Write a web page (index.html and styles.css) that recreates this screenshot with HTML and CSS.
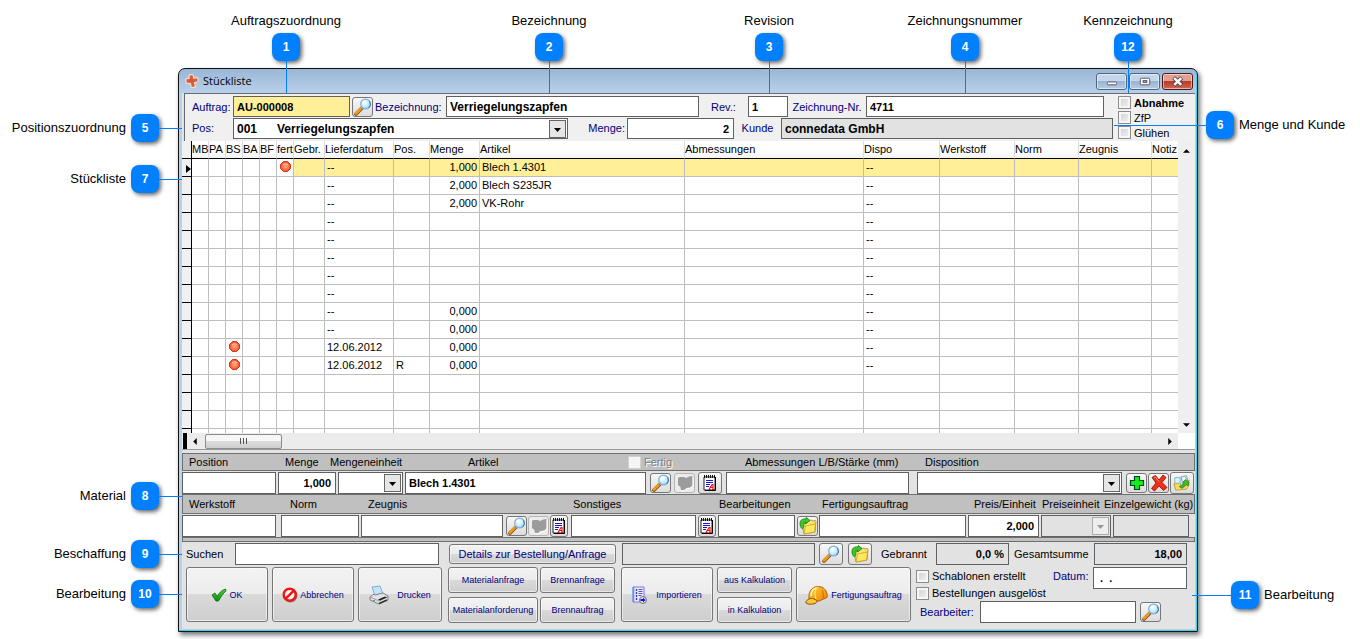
FILE: index.html
```html
<!DOCTYPE html>
<html lang="de">
<head>
<meta charset="utf-8">
<title>Stückliste</title>
<link rel="stylesheet" href="styles.css">
</head>
<body>
<svg class="sprite" aria-hidden="true">
  <defs>
    <linearGradient id="g-handle" x1="0" y1="0" x2="1" y2="1"><stop offset="0" stop-color="#ffc24a"/><stop offset="1" stop-color="#d96a00"/></linearGradient>
    <radialGradient id="g-lens" cx=".4" cy=".35" r=".7"><stop offset="0" stop-color="#ffffff"/><stop offset=".6" stop-color="#c4ecfb"/><stop offset="1" stop-color="#8fc8ee"/></radialGradient>
    <radialGradient id="g-dot" cx=".5" cy=".5" r=".6"><stop offset="0" stop-color="#ffb08c"/><stop offset=".6" stop-color="#ff6a40"/><stop offset="1" stop-color="#e83010"/></radialGradient>
    <linearGradient id="g-folder" x1="0" y1="0" x2="1" y2="1"><stop offset="0" stop-color="#fff9a8"/><stop offset="1" stop-color="#ecc520"/></linearGradient>
    <linearGradient id="g-check" x1="0" y1="0" x2="0" y2="1"><stop offset="0" stop-color="#4fd838"/><stop offset="1" stop-color="#0c8a10"/></linearGradient>
    <linearGradient id="g-helmet" x1="0" y1="0" x2="1" y2="1"><stop offset="0" stop-color="#ffd23c"/><stop offset="1" stop-color="#ee7f00"/></linearGradient>
  </defs>
  <symbol id="i-lens" viewBox="0 0 18 18">
    <path d="M2 16 8 10" stroke="#7a4a10" stroke-width="3.600" stroke-linecap="round"/>
    <path d="M2 15.500 7.400 10" stroke="#f39a1c" stroke-width="2.600" stroke-linecap="round"/>
    <path d="m7 11 2-2" stroke="#8090a0" stroke-width="2"/>
    <circle cx="11.600" cy="6" r="4.900" fill="url(#g-lens)" stroke="#7fb0d8" stroke-width="1.200"/>
    <path d="M8.600 5.500a3 3 0 0 1 3-2.600" fill="none" stroke="#fff" stroke-width="1.200"/>
    <path d="M15.600 3.400a5 5 0 0 1-1 6.600" fill="none" stroke="#4d6f98" stroke-width="1"/>
  </symbol>
  <symbol id="i-part" viewBox="0 0 18 18">
    <path d="M2 4 3.500 3H8l2 1 3-1.500L16.500 2v9l-2 2.500-4 .5-2.500 2H5l-.5-3L2 11z" fill="#9c9c9c"/>
    <path d="M17 3v8.500L15 14l-4 .8L8.500 17H5" fill="none" stroke="#fff" stroke-width=".8"/>
  </symbol>
  <symbol id="i-note" viewBox="0 0 14 18">
    <path d="M1 3h11v13H1z" fill="#fff" stroke="#222" stroke-width="1"/>
    <path d="M12.500 3v13.500H2" fill="none" stroke="#000" stroke-width="1"/>
    <path d="M1.500 1v3M3.500 1v3M5.500 1v3M7.500 1v3M9.500 1v3M11.500 1v3" stroke="#111" stroke-width="1"/>
    <path d="M3 6.500h7M3 8.500h7M3 10.500h4M3 12.500h3" stroke="#1414d8" stroke-width="1"/>
    <path d="M6 15.500 9 10.500h1v5M7.500 13.500H10M5.500 15.500h2M9 15.500h2" fill="none" stroke="#f01010" stroke-width="1.200"/>
  </symbol>
  <symbol id="i-folder" viewBox="0 0 18 18">
    <path d="m3 7 5-1 1-2 4-1 1 1 2.500-.5.5 1-1 10.500L5 17z" fill="url(#g-folder)" stroke="#b48a10" stroke-width=".8"/>
    <path d="m5 17 1.500-8 10-2-1 8z" fill="#fde860" stroke="#c29a14" stroke-width=".7"/>
    <path d="M1 6C1 3 4 1.500 7 2l.3-1.500L11 3.500 6.500 7l.2-2C5 5 4.600 6 5 9L3.500 12C1.500 10.500 1 9 1 6z" fill="#3fc82c" stroke="#14780e" stroke-width=".8"/>
  </symbol>
  <symbol id="i-plus" viewBox="0 0 18 18">
    <path d="M6.500 2.500h5v4h4v5h-4v4h-5v-4h-4v-5h4z" fill="#10f018" stroke="#042" stroke-width="1.200"/>
  </symbol>
  <symbol id="i-cross" viewBox="0 0 18 18">
    <path d="M2 3.500 5.500 1.500 9 6l4-5 3 2.500-4 5 5 5-3.500 3L9 12l-4.500 5-3-2.500L6 9z" fill="#ee3018" stroke="#9c1208" stroke-width=".9"/>
    <path d="m4 4 1.500-.8L9 7.500" fill="none" stroke="#ff9a80" stroke-width="1"/>
  </symbol>
  <symbol id="i-docs" viewBox="0 0 20 18">
    <path d="M2 3h6v9H2z" fill="#d8f2fc" stroke="#6aa8c8" stroke-width=".9"/>
    <path d="m1 10 6-1 3 3 5-2 3 1-3 5-12 1z" fill="#f4d860" stroke="#b89020" stroke-width=".8"/>
    <path d="m9 2 6-1 2 7-6 3z" fill="#e6f8ff" stroke="#5c98bc" stroke-width=".9"/>
    <path d="m14 5 4 3-1 4-2-1-5 4-3-2 5-3-1-2z" fill="#42b82c" stroke="#1a7010" stroke-width=".7"/>
    <path d="m13 2 4 4h2" fill="none" stroke="#d0a828" stroke-width="1"/>
  </symbol>
  <symbol id="i-check" viewBox="0 0 16 14">
    <path d="M1 7 4 5l2 3.500C8 5 11 2 14.500 1l.5 2c-3 2.500-5 5.500-7.500 10H5z" fill="url(#g-check)" stroke="#0a6a0c" stroke-width=".8"/>
  </symbol>
  <symbol id="i-no" viewBox="0 0 16 16">
    <circle cx="8.500" cy="8.500" r="6" fill="none" stroke="#8a7a7a" stroke-width="2"/>
    <circle cx="7.700" cy="7.700" r="6" fill="#f4f4f4" stroke="#f01414" stroke-width="2.400"/>
    <path d="m3.700 11.700 8-8" stroke="#f01414" stroke-width="2.400"/>
  </symbol>
  <symbol id="i-printer" viewBox="0 0 20 20">
    <path d="m3 2 8-1 3 8-8 2z" fill="#c4e2fa" stroke="#6c9cd4" stroke-width=".8"/>
    <path d="m1 12 4-3 1 1 8-2 5 3v4l-9 4-9-4z" fill="#e2e2e4" stroke="#77777c" stroke-width=".9"/>
    <path d="m1 12 9 4 9-4.500" fill="none" stroke="#8a8a90" stroke-width=".8"/>
    <path d="m9 14.500 7-3 2 1-7 3z" fill="#222"/>
    <path d="m10 18.500 8-3.500" stroke="#333" stroke-width="1.400"/>
    <path d="M4 15.500h2" stroke="#3cab3c" stroke-width="1"/>
  </symbol>
  <symbol id="i-import" viewBox="0 0 16 18">
    <path d="M1 1h11v15H1z" fill="#e8ecff" stroke="#8a6cf0" stroke-width="1"/>
    <path d="M1.500 1v15" stroke="#4a9cf4" stroke-width="1.600"/>
    <path d="M4.500 3v12" stroke="#3a3aa0" stroke-width="1.400" stroke-dasharray="2 1"/>
    <path d="M6.500 3.500h4M6.500 5.500h4M6.500 7.500h4M6.500 9.500h3" stroke="#5656b8" stroke-width="1"/>
    <circle cx="11" cy="14" r="3.500" fill="#e4e4ec" stroke="#666" stroke-width=".9"/>
    <path d="M8.500 13h2.500v-1.500L13.500 14 11 16.500V15H8.500z" fill="#1010e8"/>
  </symbol>
  <symbol id="i-helmet" viewBox="0 0 24 20">
    <path d="M4 13C3 6 8 1 14 1.500c6 .5 9 6 8 11l-8 3.500-8 1z" fill="url(#g-helmet)" stroke="#a85a00" stroke-width=".9"/>
    <path d="M1 16.500c2-3 6-4 9-2 3 1 2 3 0 4-3 1-7 1-9-.5z" fill="#ffc72e" stroke="#8c4c00" stroke-width="1"/>
    <path d="M11 14C9 9 10 4 13 1.500" fill="none" stroke="#fff0a0" stroke-width="1"/>
    <path d="M6 11c0-4 2-7 5-8" fill="none" stroke="#fff3b0" stroke-width="1.500"/>
    <path d="M17 5c1 2 2 5 1 8" fill="none" stroke="#c86800" stroke-width="1"/>
  </symbol>
  <symbol id="i-app" viewBox="0 0 14 14">
    <path d="M4 .8 8.200.8 8.500 4.200 13 3.800v4l-3.500.7 1 4.500-4.200.5L5.500 9.500 1 9V4.800l3.300-.3z" fill="#e85a28" stroke="#f4ece8" stroke-width="1"/>
    <path d="M5.500 5.500 8 8" stroke="#806a90" stroke-width="1.500"/>
  </symbol>
  <symbol id="i-dot" viewBox="0 0 11 11">
    <path d="M3.500.5h4l3 3v4l-3 3h-4l-3-3v-4z" fill="url(#g-dot)" stroke="#d42a0c" stroke-width=".9"/>
    <path d="M3 4c1-1.500 4-1.500 5 0" fill="none" stroke="#ffd0b8" stroke-width="1"/>
  </symbol>
</svg>

<main class="figure">
  <section class="window">
    <header class="titlebar">
      <svg class="app-icon"><use href="#i-app"/></svg>
      <h1 class="title">Stückliste</h1>
      <div class="caption-buttons">
        <button type="button" class="cap" aria-label="Minimieren"><svg viewBox="0 0 30 16"><rect x="10.500" y="8.500" width="10" height="3" rx="1" fill="#fff" stroke="#556" /></svg></button>
        <button type="button" class="cap" aria-label="Maximieren"><svg viewBox="0 0 30 16"><rect x="10.500" y="4.500" width="10" height="7" rx="1" fill="#fff" stroke="#556"/><rect x="13.500" y="7" width="4" height="2" fill="#9ab" stroke="#556"/></svg></button>
        <button type="button" class="cap close" aria-label="Schließen"><svg viewBox="0 0 30 16"><path d="m11 4 8.500 8M19.500 4 11 12" stroke="#545" stroke-width="4.400"/><path d="m11.500 4.500 7.500 7M19 4.500l-7.500 7" stroke="#fff" stroke-width="2.600"/></svg></button>
      </div>
    </header>

    <div class="client">
      <form class="head">
        <div class="head-fields">
          <div class="head-row one">
            <label for="auftrag">Auftrag:</label>
            <input id="auftrag" class="field hot" value="AU-000008">
            <button type="button" class="tool" aria-label="Auftrag suchen"><svg><use href="#i-lens"/></svg></button>
            <label for="bez">Bezeichnung:</label>
            <input id="bez" class="field large" value="Verriegelungszapfen">
            <label for="rev" class="mid">Rev.:</label>
            <input id="rev" class="field" value="1">
            <label for="znr" class="mid">Zeichnung-Nr.</label>
            <input id="znr" class="field" value="4711">
          </div>
          <div class="head-row two">
            <label for="pos">Pos:</label>
            <select id="pos" class="field large"><option>001 &nbsp; &nbsp; &nbsp;Verriegelungszapfen</option></select>
            <label for="menge" class="right-text">Menge:</label>
            <input id="menge" class="field num" value="2">
            <label for="kunde" class="mid">Kunde</label>
            <input id="kunde" class="field flat large" value="connedata GmbH" readonly>
          </div>
        </div>
        <div class="flags">
          <label class="tick strong"><input type="checkbox">Abnahme</label>
          <label class="tick"><input type="checkbox">ZfP</label>
          <label class="tick"><input type="checkbox">Glühen</label>
        </div>
      </form>

      <div class="list">
        <div class="list-view">
          <table class="parts">
            <colgroup><col class="c-ind"><col class="c-f"><col class="c-f"><col class="c-f"><col class="c-f"><col class="c-f"><col class="c-f"><col class="c-geb"><col class="c-lief"><col class="c-pos"><col class="c-men"><col class="c-art"><col class="c-abm"><col class="c-dis"><col class="c-wer"><col class="c-nor"><col class="c-zeu"><col class="c-not"></colgroup>
            <thead><tr><th></th><th>MB</th><th>PA</th><th>BS</th><th>BA</th><th>BF</th><th>fert</th><th>Gebr.</th><th>Lieferdatum</th><th>Pos.</th><th>Menge</th><th>Artikel</th><th>Abmessungen</th><th>Dispo</th><th>Werkstoff</th><th>Norm</th><th>Zeugnis</th><th>Notiz</th></tr></thead>
            <tbody>
              <tr class="current"><td class="ptr"><svg viewBox="0 0 5 8"><path d="M0 0v8l5-4z"/></svg><td><td><td><td><td><td class="dot"><svg><use href="#i-dot"/></svg><td><td>--<td><td>1,000<td>Blech 1.4301<td><td>--<td><td><td><td></tr>
              <tr><td><td><td><td><td><td><td><td><td>--<td><td>2,000<td>Blech S235JR<td><td>--<td><td><td><td></tr>
              <tr><td><td><td><td><td><td><td><td><td>--<td><td>2,000<td>VK-Rohr<td><td>--<td><td><td><td></tr>
              <tr><td><td><td><td><td><td><td><td><td>--<td><td><td><td><td>--<td><td><td><td></tr>
              <tr><td><td><td><td><td><td><td><td><td>--<td><td><td><td><td>--<td><td><td><td></tr>
              <tr><td><td><td><td><td><td><td><td><td>--<td><td><td><td><td>--<td><td><td><td></tr>
              <tr><td><td><td><td><td><td><td><td><td>--<td><td><td><td><td>--<td><td><td><td></tr>
              <tr><td><td><td><td><td><td><td><td><td>--<td><td><td><td><td>--<td><td><td><td></tr>
              <tr><td><td><td><td><td><td><td><td><td>--<td><td>0,000<td><td><td>--<td><td><td><td></tr>
              <tr><td><td><td><td><td><td><td><td><td>--<td><td>0,000<td><td><td>--<td><td><td><td></tr>
              <tr><td><td><td><td class="dot"><svg><use href="#i-dot"/></svg><td><td><td><td><td>12.06.2012<td><td>0,000<td><td><td>--<td><td><td><td></tr>
              <tr><td><td><td><td class="dot"><svg><use href="#i-dot"/></svg><td><td><td><td><td>12.06.2012<td>R<td>0,000<td><td><td>--<td><td><td><td></tr>
              <tr><td><td><td><td><td><td><td><td><td><td><td><td><td><td><td><td><td><td></tr>
              <tr><td><td><td><td><td><td><td><td><td><td><td><td><td><td><td><td><td><td></tr>
              <tr><td><td><td><td><td><td><td><td><td><td><td><td><td><td><td><td><td><td></tr>
              <tr><td><td><td><td><td><td><td><td><td><td><td><td><td><td><td><td><td><td></tr>
            </tbody>
          </table>
        </div>
        <div class="vbar"><svg viewBox="0 0 8 4"><path d="M0 4 4 0l4 4z"/></svg><svg viewBox="0 0 8 4"><path d="M0 0h8L4 4z"/></svg></div>
        <div class="hbar">
          <span class="stop"></span>
          <svg viewBox="0 0 4 8"><path d="M4 0v8L0 4z"/></svg>
          <span class="thumb"><i></i><i></i><i></i></span>
          <svg class="end" viewBox="0 0 4 8"><path d="M0 0v8l4-4z"/></svg>
        </div>
      </div>

      <form class="detail">
        <div class="band b1">
          <label for="d-pos">Position</label><label for="d-menge">Menge</label><label for="d-me">Mengeneinheit</label><label for="d-art">Artikel</label>
          <label class="tick off"><input type="checkbox" disabled>Fertig</label>
          <label for="d-abm">Abmessungen L/B/Stärke (mm)</label><label for="d-dis">Disposition</label>
        </div>
        <div class="fields f1">
          <input id="d-pos" class="field">
          <input id="d-menge" class="field num" value="1,000">
          <select id="d-me" class="field"><option></option></select>
          <input id="d-art" class="field" value="Blech 1.4301">
          <div class="tools">
            <button type="button" class="tool" aria-label="Artikel suchen"><svg><use href="#i-lens"/></svg></button>
            <button type="button" class="tool" aria-label="Zeichnung" disabled><svg><use href="#i-part"/></svg></button>
            <button type="button" class="tool wide" aria-label="Notiz"><svg><use href="#i-note"/></svg></button>
          </div>
          <input id="d-abm" class="field">
          <div class="inset"><select id="d-dis" class="field"><option></option></select></div>
          <div class="tools tight">
            <button type="button" class="tool" aria-label="Hinzufügen"><svg><use href="#i-plus"/></svg></button>
            <button type="button" class="tool" aria-label="Löschen"><svg><use href="#i-cross"/></svg></button>
            <button type="button" class="tool wide" aria-label="Kopieren"><svg><use href="#i-docs"/></svg></button>
          </div>
        </div>
        <div class="band b2">
          <label for="e-wer">Werkstoff</label><label for="e-nor">Norm</label><label for="e-zeu">Zeugnis</label><label for="e-son">Sonstiges</label><label for="e-bea">Bearbeitungen</label><label for="e-fer">Fertigungsauftrag</label><label for="e-pre">Preis/Einheit</label><label for="e-pe">Preiseinheit</label><label for="e-gew">Einzelgewicht (kg)</label>
        </div>
        <div class="fields f2">
          <input id="e-wer" class="field">
          <div class="inset slight"><input id="e-nor" class="field"></div>
          <input id="e-zeu" class="field">
          <div class="tools">
            <button type="button" class="tool" aria-label="Zeugnis suchen"><svg><use href="#i-lens"/></svg></button>
            <button type="button" class="tool" aria-label="Zeichnung" disabled><svg><use href="#i-part"/></svg></button>
            <button type="button" class="tool slim" aria-label="Notiz"><svg><use href="#i-note"/></svg></button>
          </div>
          <input id="e-son" class="field">
          <button type="button" class="tool slim" aria-label="Notiz"><svg><use href="#i-note"/></svg></button>
          <input id="e-bea" class="field">
          <button type="button" class="tool" aria-label="Bearbeitungen öffnen"><svg><use href="#i-folder"/></svg></button>
          <input id="e-fer" class="field">
          <input id="e-pre" class="field num" value="2,000">
          <select id="e-pe" class="field pale" disabled><option></option></select>
          <input id="e-gew" class="field pale" disabled>
        </div>
        <div class="band thin"></div>
      </form>

      <form class="foot">
        <div class="search">
          <label for="s-q">Suchen</label>
          <input id="s-q" class="field">
          <button type="button" class="push big">Details zur Bestellung/Anfrage</button>
          <input class="field pale" aria-label="Bestellung" readonly>
          <button type="button" class="tool wide" aria-label="Bestellung suchen"><svg><use href="#i-lens"/></svg></button>
          <button type="button" class="tool wide" aria-label="Bestellung öffnen"><svg><use href="#i-folder"/></svg></button>
          <label for="s-geb" class="mid">Gebrannt</label>
          <input id="s-geb" class="field pale num" value="0,0 %" readonly>
          <label for="s-sum" class="sum">Gesamtsumme</label>
          <input id="s-sum" class="field pale num" value="18,00" readonly>
        </div>
        <div class="actions">
          <button type="button" class="push tall"><svg class="s16"><use href="#i-check"/></svg>OK</button>
          <button type="button" class="push tall"><svg class="s16"><use href="#i-no"/></svg>Abbrechen</button>
          <button type="button" class="push tall airy"><svg class="s20"><use href="#i-printer"/></svg>Drucken</button>
          <div class="quad">
            <button type="button" class="push">Materialanfrage</button>
            <button type="button" class="push">Brennanfrage</button>
            <button type="button" class="push">Materialanforderung</button>
            <button type="button" class="push">Brennauftrag</button>
          </div>
          <button type="button" class="push tall airy"><svg class="s16 high"><use href="#i-import"/></svg>Importieren</button>
          <div class="pair">
            <button type="button" class="push">aus Kalkulation</button>
            <button type="button" class="push">in Kalkulation</button>
          </div>
          <button type="button" class="push tall"><svg class="s24"><use href="#i-helmet"/></svg>Fertigungsauftrag</button>
          <div class="status">
            <div class="status-top">
              <div class="status-ticks">
                <label class="tick"><input type="checkbox">Schablonen erstellt</label>
                <label class="tick"><input type="checkbox">Bestellungen ausgelöst</label>
              </div>
              <label for="datum" class="blue">Datum:</label>
              <input id="datum" class="field date" value=" .  .">
            </div>
            <div class="status-by">
              <label for="bearb" class="blue">Bearbeiter:</label>
              <input id="bearb" class="field">
              <button type="button" class="tool" aria-label="Bearbeiter suchen"><svg><use href="#i-lens"/></svg></button>
            </div>
          </div>
        </div>
      </form>
    </div>
  </section>

  <div class="note top n1"><span>Auftragszuordnung</span><b>1</b></div>
  <div class="note top n2"><span>Bezeichnung</span><b>2</b></div>
  <div class="note top n3"><span>Revision</span><b>3</b></div>
  <div class="note top n4"><span>Zeichnungsnummer</span><b>4</b></div>
  <div class="note top n12"><span>Kennzeichnung</span><b>12</b></div>
  <div class="note left n5"><span>Positionszuordnung</span><b>5</b></div>
  <div class="note left n7"><span>Stückliste</span><b>7</b></div>
  <div class="note left n8"><span>Material</span><b>8</b></div>
  <div class="note left n9"><span>Beschaffung</span><b>9</b></div>
  <div class="note left n10"><span>Bearbeitung</span><b>10</b></div>
  <div class="note right n6"><b>6</b><span>Menge und Kunde</span></div>
  <div class="note right n11"><b>11</b><span>Bearbeitung</span></div>
</main>
</body>
</html>
```
FILE: styles.css
```css
* { box-sizing: border-box; }
body {
  margin: 0;
  background: #fff;
  color: #000;
  font: 11px/14px "Liberation Sans", Arial, sans-serif;
}
input, select, button { font: inherit; color: inherit; margin: 0; min-width: 0; }
.sprite { position: absolute; width: 0; height: 0; }

.figure { position: relative; padding: 68px 162px 8px 178px; }

/* window frame */
.window {
  border: 1px solid #111;
  border-radius: 7px 7px 0 0;
  padding: 0 2px 2px 3px;
  background: linear-gradient(#9ab7d6, #b9d0ea 24px);
  box-shadow: inset -1px -1px 0 #35d6ee, 2px 3px 5px rgba(0, 0, 0, .55);
}
.titlebar { display: flex; align-items: center; height: 24px; padding: 0 2px 0 3px; }
.app-icon { width: 14px; height: 14px; }
.title { margin: 0 0 0 4px; flex: 1; font: 11px/16px "Open Sans", sans-serif; }
.caption-buttons { display: flex; gap: 2px; }
.cap {
  width: 31px; height: 17px; padding: 0;
  border: 1px solid #51667e; border-radius: 3px;
  background: linear-gradient(#c3d6ea 45%, #9ab4d0 50%, #b4cce4);
  box-shadow: inset 0 0 0 1px rgba(255, 255, 255, .5);
}
.cap svg { display: block; width: 29px; height: 15px; fill: none; }
.cap.close { background: linear-gradient(#e2a090 45%, #b83a28 50%, #cf6a50); border-color: #541a1a; }
.client { background: #e3e3e3; }

/* shared controls */
.field {
  width: 100%; height: 22px; padding: 0 3px;
  border: 1px solid #606060; border-radius: 0; outline: 0;
  background: #fff; font-weight: bold;
}
.field.hot { background: #ffef98; }
.field.flat, .field.pale { background: #e2e2e2; }
.field.large { font-size: 12px; }
.field.num { text-align: right; padding-right: 4px; }
select.field {
  appearance: none; padding-right: 20px;
  background: #fff url("data:image/svg+xml,%3Csvg xmlns='http://www.w3.org/2000/svg' width='17' height='18'%3E%3Crect x='.5' y='.5' width='16' height='17' fill='%23e6e6e6' stroke='%23666'/%3E%3Cpath d='M5 8h7l-3.500 4z'/%3E%3C/svg%3E") no-repeat right 1px center;
}
select.field.pale {
  opacity: 1;
  background: #e2e2e2 url("data:image/svg+xml,%3Csvg xmlns='http://www.w3.org/2000/svg' width='17' height='18'%3E%3Crect x='.5' y='.5' width='16' height='17' fill='%23eee' stroke='%23aaa'/%3E%3Cpath d='M5 8h7l-3.500 4z' fill='%23999'/%3E%3C/svg%3E") no-repeat right 1px center;
}
.tool {
  display: flex; align-items: center; justify-content: center;
  width: 21px; height: 20px; padding: 0; flex: none;
  border: 1px solid #777; border-radius: 3px;
  background: linear-gradient(#f8f8f8, #dcdcdc);
}
.tool svg { width: 18px; height: 18px; flex: none; }
.tool.wide { width: 24px; height: 22px; }
.tool.slim { width: 18px; height: 22px; }
.tool:disabled { border-color: #b4b4b4; background: #ececec; }
.tools { display: flex; align-items: center; gap: 3px; padding-left: 2px; }
.tools.tight { gap: 1px; }
.inset { display: flex; padding-left: 6px; }
.inset.slight { padding-left: 3px; }
.push {
  display: flex; align-items: center; justify-content: center;
  height: 26px; padding: 0; white-space: nowrap;
  border: 1px solid #777; border-radius: 3px;
  background: linear-gradient(#f3f3f3, #ececec 48%, #dadada 50%, #cecece);
  box-shadow: inset 0 0 0 1px rgba(255, 255, 255, .55);
  color: #000080; font-size: 9px;
}
.push.big { height: 20px; font-size: 11px; }
.push.tall { height: 55px; gap: 2px; }
.push.airy { gap: 8px; }
.s16 { width: 16px; height: 16px; }
.s16.high { height: 18px; }
.s20 { width: 20px; height: 20px; }
.s24 { width: 24px; height: 20px; }
.tick { display: flex; align-items: center; gap: 3px; white-space: nowrap; }
.tick input {
  appearance: none; width: 13px; height: 13px; flex: none;
  border: 1px solid #8c8c8c; box-shadow: inset 0 0 0 2px #f6f6f6;
  background: linear-gradient(135deg, #cfcfd2, #f4f4f4);
}
.strong { font-weight: bold; }
.off { color: #808080; text-shadow: 1px 1px 0 #fff; }
.off input { border-color: #d0d0d0; background: #f4f4f4; }

/* order header */
.head {
  display: flex; gap: 5px; height: 48px; margin-left: 2px; padding: 2px 0 0 7px;
  border-top: 1px solid #6a6a72; border-left: 1px solid #6a6a72;
  background: #f0f0f0;
}
.head-fields { flex: 1; min-width: 0; color: #000080; }
.head-fields .field { color: #000; }
.head-row { display: grid; align-items: center; white-space: nowrap; }
.one { grid-template-columns: 41px 117px 25px 71px 253px 49px 40px 78px minmax(0, 1fr); padding-right: 9px; }
.one .tool { margin-left: 2px; }
.two { grid-template-columns: 41px 335px 59px 107px 47px minmax(0, 1fr); }
.one .field { height: 21px; }
.two .field { height: 21px; margin-top: 1px; }
.mid { text-align: center; }
.right-text { text-align: right; padding-right: 2px; }
.flags { width: 77px; display: flex; flex-direction: column; gap: 2px; }
.flags .tick { height: 13px; }

/* parts list */
.list { display: grid; grid-template-columns: minmax(0, 1fr) 17px; background: #fff; border-bottom: 1px solid #999; }
.list-view { height: 292px; overflow: hidden; }
.parts { width: 100%; table-layout: fixed; border-collapse: separate; border-spacing: 0; }
.parts th, .parts td { height: 18px; white-space: nowrap; line-height: 16px; vertical-align: top; border-right: 1px solid #bdbdbd; }
.parts th {
  padding: 0; font-weight: normal; text-align: left;
  border-right-color: #dcdcdc; border-bottom: 1px solid #000;
  background: linear-gradient(#fff 50%, #f3f4f5);
}
.parts td { padding: 0 2px; border-bottom: 1px solid #bdbdbd; }
.parts th:first-child, .parts td:first-child { background: #f0f0f0; border-right-color: #000; border-bottom-color: #000; }
.parts td:nth-child(11) { text-align: right; }
.parts td:last-child, .parts th:last-child { border-right: 0; }
.parts .current td:nth-child(n+8) { background: #ffef98; }
.parts .dot { padding: 2px 0 0; }
.dot svg { width: 11px; height: 11px; display: block; margin: 0 auto; }
.parts .ptr { padding: 6px 0 0 4px; }
.ptr svg { display: block; width: 5px; height: 8px; }
.c-ind { width: 10px; }
.c-f { width: 17px; }
.c-geb { width: 31px; }
.c-lief { width: 69px; }
.c-pos { width: 36px; }
.c-men { width: 50px; }
.c-abm { width: 179px; }
.c-dis { width: 76px; }
.c-wer { width: 75px; }
.c-nor { width: 64px; }
.c-zeu { width: 73px; }
.c-not { width: 26px; }
.vbar { display: flex; flex-direction: column; align-items: center; justify-content: space-between; padding: 8px 0 6px; background: #efefef; }
.vbar svg { width: 7px; height: 4px; }
.hbar { display: flex; align-items: center; height: 16px; background: #ececec; }
.stop { width: 4px; height: 16px; margin-left: 1px; background: #000; }
.hbar svg { width: 4px; height: 7px; margin: 0 8px 0 6px; }
.hbar .end { margin: 0 6px 0 auto; }
.thumb {
  display: flex; align-items: center; justify-content: center; gap: 2px;
  width: 77px; height: 15px; border: 1px solid #8c8c8c; border-radius: 2px;
  background: linear-gradient(#f6f6f6 45%, #dcdcdc 50%, #cfcfcf);
}
.thumb i { width: 1px; height: 6px; background: #555; }

/* material detail */
.detail { padding-top: 3px; }
.band {
  display: grid; align-items: center; height: 18px; padding-left: 6px;
  border: 1px solid #6f6f6f; background: #c0c0c0; white-space: nowrap;
}
.band.b1 { grid-template-columns: 96px 45px 138px minmax(0, 1fr) 117px 180px 269px; }
.band.b2 { height: 20px; grid-template-columns: 101px 78px 205px minmax(0, 1fr) 103px 152px 68px 62px 90px; }
.band.thin { height: 5px; }
.fields { display: grid; align-items: center; height: 23px; column-gap: 2px; }
.f1 { grid-template-columns: 94px 58px 65px minmax(0, 1fr) 76px 183px 211px 71px; }
.f2 { grid-template-columns: 94px 81px 142px 64px minmax(0, 1fr) 18px 77px 20px 147px 71px 70px 76px; padding-right: 6px; }
.f2 .tools { gap: 1px; }
.f2 .tools { padding-left: 1px; }

/* footer */
.foot { padding: 1px 8px 6px 4px; }
.search { display: grid; align-items: center; grid-template-columns: 49px 204px 183px 193px 29px 28px 64px 73px 85px minmax(0, 1fr); }
.search .push { margin: 0 6px 0 10px; }
.search .tool { margin-left: 4px; }
.sum { padding-left: 5px; }
.actions { display: grid; grid-template-columns: 82px 82px 84px 171px 92px 75px 115px minmax(0, 1fr); column-gap: 4px; padding-top: 2px; }
.quad { display: grid; grid-template-columns: 90px 75px; gap: 3px 2px; padding-left: 2px; }
.pair { display: grid; gap: 3px; }
.status { display: flex; flex-direction: column; gap: 12px; padding-left: 1px; }
.status-top { display: flex; height: 22px; }
.status-ticks { display: flex; flex-direction: column; gap: 3px; width: 137px; padding-top: 2px; }
.status-top .date { flex: 1; }
.status-top > .blue { width: 40px; padding-top: 2px; }
.status-by { display: flex; align-items: center; gap: 4px; padding: 0 26px 0 4px; }
.status-by .blue { width: 56px; }
.status-by .field { flex: 1; }
.blue { color: #000080; }

/* numbered callouts laid over the window */
.note { position: absolute; display: flex; align-items: center; font-size: 13px; line-height: 16px; white-space: nowrap; }
.note b {
  display: flex; align-items: center; justify-content: center;
  width: 28px; height: 28px; flex: none; border-radius: 8px;
  background: #0080ff; color: #fff; font-size: 12px;
  box-shadow: 2px 2px 4px rgba(0, 0, 0, .6);
}
.note::after, .right::before { background: #0080ff; flex: none; }
.top { flex-direction: column; top: 13px; width: 140px; margin-left: -70px; }
.top b { margin-top: 4px; }
.top::after { content: ""; width: 1px; height: 32px; }
.n1 { left: 286px; }
.n2 { left: 549px; }
.n3 { left: 769px; }
.n4 { left: 965px; }
.n12 { left: calc(100% - 232px); }
.left { left: 0; width: 182px; }
.left span { width: 131px; text-align: right; padding-right: 5px; }
.left::after { content: ""; height: 1px; width: 23px; }
.n5 { top: 114px; }
.n7 { top: 165px; }
.n8 { top: 482px; }
.n9 { top: 540px; }
.n10 { top: 580px; }
.right::before { content: ""; height: 1px; }
.right span { padding-left: 5px; }
.n6 { top: 111px; left: calc(100% - 246px); }
.n6::before { width: 92px; }
.n11 { top: 581px; left: calc(100% - 168px); }
.n11::before { width: 39px; }
```
